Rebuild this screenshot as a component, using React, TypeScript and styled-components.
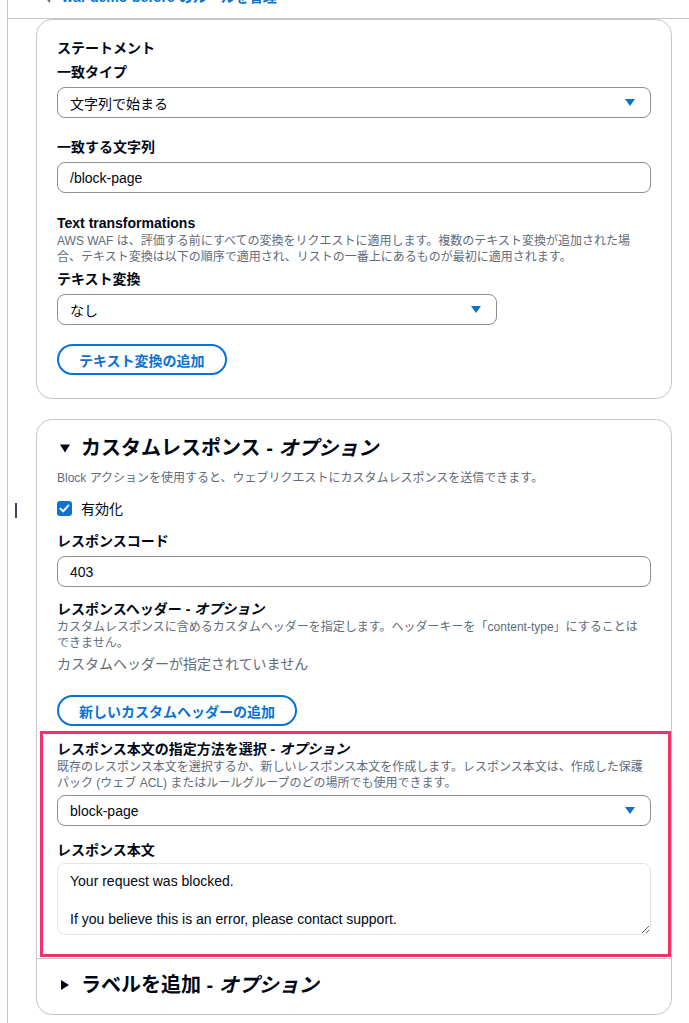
import { ReactNode } from 'react'
import styled, { createGlobalStyle } from 'styled-components'

const GlobalStyle = createGlobalStyle`
  html, body {
    margin: 0;
    padding: 0;
    background: #ffffff;
  }
  body {
    font-family: "Liberation Sans", "Noto Sans CJK JP", sans-serif;
    color: #000716;
    -webkit-font-smoothing: antialiased;
  }
`

const blue = '#0972d3'

const Caret = () => (
  <svg width="10" height="7" viewBox="0 0 10 7">
    <polygon points="0,0 10,0 5,7" fill={blue} />
  </svg>
)

const Triangle = ({ open }: { open: boolean }) => (
  <svg width="10" height="10" viewBox="0 0 10 10">
    {open ? <polygon points="0,1.5 10,1.5 5,9.5" fill="#000716" /> : <polygon points="1,0 9,5 1,10" fill="#000716" />}
  </svg>
)

const CheckIcon = () => (
  <svg width="15" height="15" viewBox="0 0 15 15">
    <rect x="0" y="0" width="15" height="15" rx="3" fill={blue} />
    <polyline points="3.5,7.8 6.2,10.4 11.3,4.6" fill="none" stroke="#fff" strokeWidth="2" strokeLinecap="round" strokeLinejoin="round" />
  </svg>
)

const Chevron = () => (
  <svg width="8" height="12" viewBox="0 0 8 12">
    <polyline points="6,1 2,6 6,11" fill="none" stroke="#5f6b7a" strokeWidth="2" />
  </svg>
)

const App = () => (
  <>
    <GlobalStyle />
    <Panel>
      <TopBar>
        <Crumb>
          <Chevron />
          <span>waf-demo-before のルールを管理</span>
        </Crumb>
      </TopBar>
      <Body>
        <Card $pt={18} $pb={23}>
          <Label>ステートメント</Label>
          <Label $mt={4}>一致タイプ</Label>
          <Select $mt={5}>
            <span>文字列で始まる</span>
            <Caret />
          </Select>
          <Label $mt={19}>一致する文字列</Label>
          <Input $mt={5} readOnly value="/block-page" />
          <Label $mt={20}>Text transformations</Label>
          <Desc>
            AWS WAF は、評価する前にすべての変換をリクエストに適用します。複数のテキスト変換が追加された場合、テキスト変換は以下の順序で適用され、リストの一番上にあるものが最初に適用されます。
          </Desc>
          <Label $mt={4}>テキスト変換</Label>
          <Select $mt={5} $width={440}>
            <span>なし</span>
            <Caret />
          </Select>
          <Button $mt={19}>テキスト変換の追加</Button>
        </Card>

        <Card $pt={16} $pb={17}>
          <Cursor />
          <SectionHeader>
            <Triangle open />
            <span>
              カスタムレスポンス - <em>オプション</em>
            </span>
          </SectionHeader>
          <Desc $mt={10}>Block アクションを使用すると、ウェブリクエストにカスタムレスポンスを送信できます。</Desc>
          <CheckRow>
            <CheckIcon />
            <span>有効化</span>
          </CheckRow>
          <Label $mt={13}>レスポンスコード</Label>
          <Input $mt={5} readOnly value="403" />
          <Label $mt={12}>
            レスポンスヘッダー - <em>オプション</em>
          </Label>
          <Desc>
            カスタムレスポンスに含めるカスタムヘッダーを指定します。ヘッダーキーを「content-type」にすることは
            <br />
            できません。
          </Desc>
          <Empty>カスタムヘッダーが指定されていません</Empty>
          <Button $mt={21}>新しいカスタムヘッダーの追加</Button>

          <Highlight>
            <Label>
              レスポンス本文の指定方法を選択 - <em>オプション</em>
            </Label>
            <Desc>
              既存のレスポンス本文を選択するか、新しいレスポンス本文を作成します。レスポンス本文は、作成した保護パック (ウェブ ACL) またはルールグループのどの場所でも使用できます。
            </Desc>
            <Select $mt={4}>
              <span>block-page</span>
              <Caret />
            </Select>
            <Label $mt={14}>レスポンス本文</Label>
            <TextArea
              readOnly
              value={'Your request was blocked.\n\nIf you believe this is an error, please contact support.'}
            />
          </Highlight>
          <Divider />
          <SectionHeader $mt={14}>
            <Triangle open={false} />
            <span>
              ラベルを追加 - <em>オプション</em>
            </span>
          </SectionHeader>
        </Card>
      </Body>
    </Panel>
  </>
)

type Spacing = { $mt?: number; children?: ReactNode }

const Panel = styled.div`
  margin-left: 7px;
  min-height: 100vh;
  border-left: 1px solid #c6c6cd;
  box-sizing: border-box;
`

const TopBar = styled.div`
  height: 18px;
  border-bottom: 1px solid #c6c6cd;
  overflow: hidden;
  padding-left: 36px;
`

const Crumb = styled.div`
  display: flex;
  align-items: center;
  gap: 10px;
  margin-top: -13px;
  font-size: 14px;
  line-height: 20px;
  font-weight: 700;
  color: ${blue};
`

const Body = styled.div`
  display: flex;
  flex-direction: column;
  gap: 20px;
  padding: 0 17px 10px 28px;
`

const Card = styled.div<{ $pt: number; $pb: number }>`
  position: relative;
  display: flex;
  flex-direction: column;
  align-items: flex-start;
  border: 1px solid #c6c6cd;
  border-radius: 16px;
  padding: ${(p) => p.$pt}px 20px ${(p) => p.$pb}px 20px;
  background: #ffffff;
`

const Label = styled.div<Spacing>`
  margin-top: ${(p) => p.$mt ?? 0}px;
  font-size: 14px;
  line-height: 20px;
  font-weight: 700;
  color: #000716;
  em {
    font-style: italic;
  }
`

const Desc = styled.div<Spacing>`
  margin-top: ${(p) => p.$mt ?? 0}px;
  font-size: 12px;
  line-height: 16px;
  color: #5f6b7a;
`

const Select = styled.div<Spacing & { $width?: number }>`
  margin-top: ${(p) => p.$mt ?? 0}px;
  box-sizing: border-box;
  width: ${(p) => (p.$width ? `${p.$width}px` : '100%')};
  height: 31px;
  display: flex;
  align-items: center;
  justify-content: space-between;
  padding: 0 15px 0 12px;
  border: 1px solid #8c8c94;
  border-radius: 8px;
  font-size: 14px;
  color: #000716;
`

const Input = styled.input<{ $mt?: number }>`
  margin-top: ${(p) => p.$mt ?? 0}px;
  box-sizing: border-box;
  width: 100%;
  height: 31px;
  padding: 0 12px;
  border: 1px solid #8c8c94;
  border-radius: 8px;
  font-family: inherit;
  font-size: 14px;
  color: #000716;
  outline: none;
`

const Button = styled.button<{ $mt?: number }>`
  margin-top: ${(p) => p.$mt ?? 0}px;
  height: 31px;
  padding: 0 20px;
  border: 2px solid ${blue};
  border-radius: 20px;
  background: #ffffff;
  color: ${blue};
  font-family: inherit;
  font-size: 14px;
  font-weight: 700;
  cursor: pointer;
`

const SectionHeader = styled.div<{ $mt?: number }>`
  margin-top: ${(p) => p.$mt ?? 0}px;
  display: flex;
  align-items: center;
  gap: 11px;
  padding-left: 3px;
  font-size: 20px;
  line-height: 24px;
  font-weight: 700;
  color: #000716;
`

const CheckRow = styled.label`
  margin-top: 12px;
  display: flex;
  align-items: center;
  gap: 9px;
  height: 20px;
  font-size: 14px;
  color: #000716;
`

const Empty = styled.div`
  margin-top: 3px;
  font-size: 14px;
  line-height: 20px;
  color: #5f6b7a;
`

const Highlight = styled.div`
  align-self: stretch;
  display: flex;
  flex-direction: column;
  align-items: flex-start;
  margin: 5px -20px 0 -17px;
  padding: 5px 17px 19px 14px;
  border: 3px solid #f2326b;
`

const TextArea = styled.textarea`
  margin-top: 3px;
  box-sizing: border-box;
  width: 100%;
  height: 72px;
  padding: 8px 12px 6px;
  border: 1px solid #e2e4e8;
  border-radius: 8px;
  font-family: inherit;
  font-size: 14px;
  line-height: 19px;
  color: #000716;
  outline: none;
  resize: vertical;
`

const Divider = styled.div`
  align-self: stretch;
  height: 1px;
  margin: 1px -20px 0;
  background: #c6c6cd;
`

const Cursor = styled.div`
  position: absolute;
  left: -22px;
  top: 83px;
  width: 2px;
  height: 15px;
  background: #414750;
`

export default App
